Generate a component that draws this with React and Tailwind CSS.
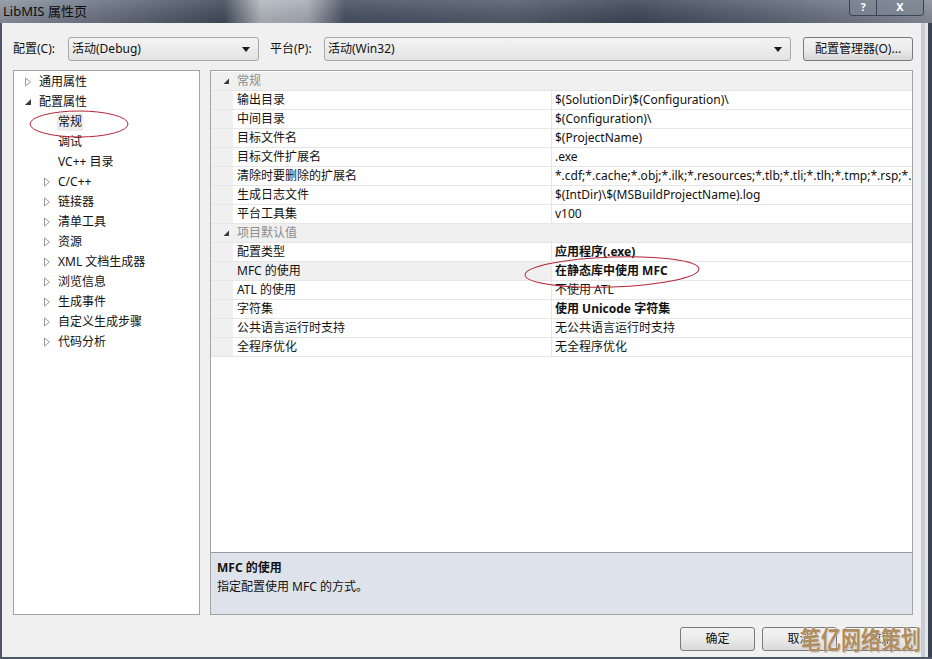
import React from "react";

const general = [
  ["输出目录", "$(SolutionDir)$(Configuration)\\"],
  ["中间目录", "$(Configuration)\\"],
  ["目标文件名", "$(ProjectName)"],
  ["目标文件扩展名", ".exe"],
  ["清除时要删除的扩展名", "*.cdf;*.cache;*.obj;*.ilk;*.resources;*.tlb;*.tli;*.tlh;*.tmp;*.rsp;*.pgc;*.pgd;*.meta;$(TargetPath)"],
  ["生成日志文件", "$(IntDir)\\$(MSBuildProjectName).log"],
  ["平台工具集", "v100"],
];

const defaults = [
  ["配置类型", "应用程序(.exe)", true],
  ["MFC 的使用", "在静态库中使用 MFC", true, true],
  ["ATL 的使用", "不使用 ATL"],
  ["字符集", "使用 Unicode 字符集", true],
  ["公共语言运行时支持", "无公共语言运行时支持"],
  ["全程序优化", "无全程序优化"],
];

const tree = [
  { label: "通用属性", level: 0, arrow: "closed" },
  { label: "配置属性", level: 0, arrow: "open" },
  { label: "常规", level: 1, selected: true },
  { label: "调试", level: 1 },
  { label: "VC++ 目录", level: 1 },
  { label: "C/C++", level: 1, arrow: "closed" },
  { label: "链接器", level: 1, arrow: "closed" },
  { label: "清单工具", level: 1, arrow: "closed" },
  { label: "资源", level: 1, arrow: "closed" },
  { label: "XML 文档生成器", level: 1, arrow: "closed" },
  { label: "浏览信息", level: 1, arrow: "closed" },
  { label: "生成事件", level: 1, arrow: "closed" },
  { label: "自定义生成步骤", level: 1, arrow: "closed" },
  { label: "代码分析", level: 1, arrow: "closed" },
];

function Arrow({ type }) {
  if (type === "open")
    return (
      <svg width="8" height="8" viewBox="0 0 8 8">
        <path d="M7 1 L7 7 L1 7 Z" fill="#3c3c3c" />
      </svg>
    );
  if (type === "closed")
    return (
      <svg width="8" height="10" viewBox="0 0 8 10">
        <path d="M1.5 1 L6.5 5 L1.5 9 Z" fill="none" stroke="#9a9a9a" strokeWidth="1" />
      </svg>
    );
  return null;
}

function Combo({ text, className }) {
  return (
    <div
      className={`h-[24px] shrink-0 flex items-center justify-between rounded-[3px] border border-[#a9a9a9] bg-gradient-to-b from-[#f4f4f4] to-[#e3e3e3] pl-[3px] pr-[8px] ${className}`}
    >
      <span>{text}</span>
      <svg width="8" height="5" viewBox="0 0 8 5">
        <path d="M0 0 L8 0 L4 5 Z" fill="#1a1a1a" />
      </svg>
    </div>
  );
}

function Btn({ children, className = "" }) {
  return (
    <div
      className={`h-[24px] shrink-0 flex items-center justify-center rounded-[3px] border border-[#7a7a7a] bg-gradient-to-b from-[#f3f3f3] via-[#ebebeb] to-[#d8d8d8] ${className}`}
    >
      {children}
    </div>
  );
}

function Category({ label }) {
  return (
    <div className="h-[19px] shrink-0 flex items-center bg-[#f0f0f0] border-b border-[#e6e6e6]">
      <div className="w-[22px] flex justify-end pr-[3px]">
        <svg width="7" height="7" viewBox="0 0 7 7">
          <path d="M6 0.5 L6 6 L0.5 6 Z" fill="#3c3c3c" />
        </svg>
      </div>
      <span className="pl-[4px] text-[#8c8c8c]">{label}</span>
    </div>
  );
}

function Row({ label, value, bold, selected }) {
  return (
    <div className="h-[19px] shrink-0 flex border-b border-[#e6e6e6]">
      <div className="w-[22px] shrink-0 bg-[#f0f0f0]" />
      <div
        className={`w-[319px] shrink-0 pl-[4px] leading-[18px] border-r border-[#e6e6e6] ${selected ? "bg-[#f0f0f0]" : "bg-white"}`}
      >
        {label}
      </div>
      <div className={`flex-1 min-w-0 pl-[3px] leading-[18px] whitespace-nowrap overflow-hidden ${bold ? "font-bold" : ""}`}>
        {value}
      </div>
    </div>
  );
}

export default function App() {
  return (
    <div
      className="relative w-[932px] h-[659px] overflow-hidden bg-[#3a4352] flex flex-col text-[12px] text-[#111]"
      style={{ fontFamily: '"Noto Sans", "Noto Sans CJK SC", sans-serif' }}
    >
      {/* title bar */}
      <div className="relative h-[23px] shrink-0 flex items-start bg-[linear-gradient(90deg,#8e97a3_0%,#6a7382_12%,#434d5c_24%,#b5bac2_28%,#a9afb8_33%,#4a5465_37%,#56606f_55%,#404a5a_68%,#5d6777_82%,#8a929e_100%)]">
        <div className="absolute inset-0 bg-gradient-to-b from-white/10 to-black/10" />
        <span className="relative pl-[3px] pt-[2px] text-[13px] text-[#0d0d0d]">LibMIS 属性页</span>
        <div className="relative ml-auto mr-[8px] flex h-[16px] rounded-b-[4px] border border-t-0 border-[#3b4352] overflow-hidden">
          <div className="w-[27px] flex items-center justify-center border-r border-[#3b4352] bg-[#7c8593]/70 text-white text-[11px] font-bold">
            ?
          </div>
          <div className="w-[46px] flex items-center justify-center bg-[#7c8593]/70 text-white text-[11px] font-bold">
            X
          </div>
        </div>
      </div>

      {/* window body */}
      <div className="flex flex-1 min-h-0">
        <div className="w-[2px] shrink-0 bg-[#4d5666]" />
        <div className="flex-1 min-w-0 flex flex-col bg-[#f0f0f0] pl-[11px] pr-0 pt-[14px] pb-[7px]">
          {/* top row */}
          <div className="flex items-center h-[24px] shrink-0">
            <span className="w-[55px] shrink-0">配置(C):</span>
            <Combo text="活动(Debug)" className="w-[191px]" />
            <span className="ml-[11px] w-[54px] shrink-0">平台(P):</span>
            <Combo text="活动(Win32)" className="w-[467px]" />
            <Btn className="ml-[12px] w-[110px]">配置管理器(O)...</Btn>
          </div>

          {/* panels */}
          <div className="flex mt-[9px] h-[545px] shrink-0 pr-[6px]">
            <div className="w-[187px] shrink-0 border border-[#a3a3a3] bg-white pt-[1px]">
              {tree.map((t) => (
                <div
                  key={t.label}
                  className="h-[20px] flex items-center"
                  style={{ paddingLeft: 10 + t.level * 19 }}
                >
                  <div className="w-[15px] flex items-center">
                    <Arrow type={t.arrow} />
                  </div>
                  <span className={t.selected ? "bg-[#ececec] px-[1px] -ml-[1px]" : ""}>{t.label}</span>
                </div>
              ))}
            </div>

            <div className="ml-[10px] flex-1 min-w-0 flex flex-col border border-[#a3a3a3]">
              <div className="flex-1 min-h-0 bg-white flex flex-col pt-[1px]">
                <Category label="常规" />
                {general.map(([l, v]) => (
                  <Row key={l} label={l} value={v} />
                ))}
                <Category label="项目默认值" />
                {defaults.map(([l, v, b, s]) => (
                  <Row key={l} label={l} value={v} bold={b} selected={s} />
                ))}
              </div>
              <div className="h-[62px] shrink-0 border-t border-[#9a9a9a] bg-[#dee2ea] px-[6px] pt-[5px] leading-[19px]">
                <div className="font-bold">MFC 的使用</div>
                <div>指定配置使用 MFC 的方式。</div>
              </div>
            </div>
          </div>

          {/* buttons */}
          <div className="flex justify-end gap-[7px] mt-[12px]">
            <Btn className="w-[75px]">确定</Btn>
            <Btn className="w-[75px]">取消</Btn>
            <Btn className="w-[75px]">应用</Btn>
          </div>
        </div>
        <div className="w-[2px] shrink-0 bg-[#f0f0f0]" />
        <div className="w-[4px] shrink-0 bg-[#c9ccd1]" />
        <div className="w-[3px] shrink-0 bg-[#e4e6ea]" />
        <div className="w-[4px] shrink-0 bg-[#3c4452]" />
      </div>
      <div className="h-[2px] shrink-0 bg-[#4d5666]" />

      {/* red annotations */}
      <svg className="absolute left-0 top-0 pointer-events-none" width="932" height="659">
        <ellipse cx="79" cy="124" rx="49" ry="13" fill="none" stroke="#b3263a" strokeWidth="1" />
        <ellipse cx="612" cy="272" rx="87" ry="15" fill="none" stroke="#b3263a" strokeWidth="1" transform="rotate(-2 612 272)" />
      </svg>

      {/* watermark */}
      <div
        className="absolute left-[801px] top-[620px] origin-left scale-x-[0.8] text-[25px] font-bold whitespace-nowrap text-[#b08d5e]"
        style={{ fontFamily: '"Noto Sans CJK SC", sans-serif', textShadow: "0 0 2px #fff, 1px 1px 1px rgba(0,0,0,0.25)" }}
      >
        笔亿网络策划
      </div>
    </div>
  );
}
